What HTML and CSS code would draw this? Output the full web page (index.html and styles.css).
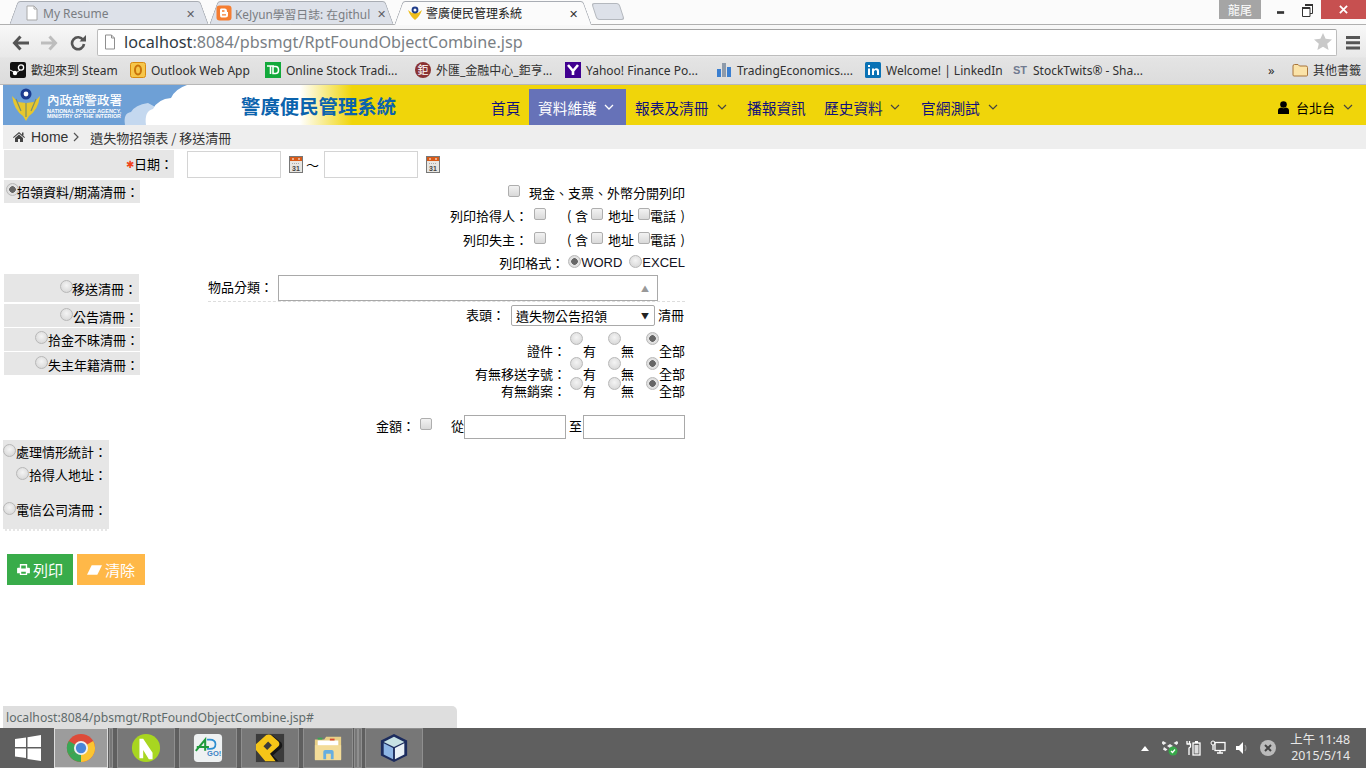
FILE: index.html
```html
<!DOCTYPE html>
<html lang="zh-Hant">
<head>
<meta charset="utf-8">
<title>警廣便民管理系統</title>
<link rel="stylesheet" href="styles.css">
</head>
<body>
<div class="screen">
  <div class="tabstrip">
    <div class="tab t1">
      <svg class="favicon" viewBox="0 0 16 16"><path d="M3 1h7l3 3v11H3z" fill="#fff" stroke="#a8a8a8"/><path d="M10 1v3h3" fill="none" stroke="#a8a8a8"/></svg>
      <span class="tabtext">My Resume</span><span class="tabx">✕</span>
    </div>
    <div class="tab t2">
      <svg class="favicon" viewBox="0 0 16 16"><rect x="0.500" y="0.500" width="15" height="15" rx="3" fill="#f57d31"/><path d="M5 3.500h4q2 0 2 2.500v1h1v3q0 2.500-2.500 2.500h-4Q4 12.500 4 10V5q0-1.500 1-1.500z" fill="#fff"/><path d="M6 6h2.500M6 9.800h4" stroke="#f57d31" stroke-width="1.300"/></svg>
      <span class="tabtext">KeJyun學習日誌: 在githul</span><span class="tabx">✕</span>
    </div>
    <div class="tab t3 active">
      <svg class="favicon" viewBox="0 0 16 16"><path d="M1 5q2 6 7 10q5-4 7-10l-4 3H5z" fill="#eebd1c"/><circle cx="8" cy="5" r="3.400" fill="#1f3d8a"/><circle cx="8" cy="5" r="1.500" fill="#fff"/></svg>
      <span class="tabtext">警廣便民管理系統</span><span class="tabx dark">✕</span>
    </div>
    <div class="newtab"></div>
    <div class="winbtns">
      <span class="ime">龍尾</span>
      <svg class="wmin" viewBox="0 0 9 3"><rect width="8" height="3" fill="#333"/></svg>
      <svg class="wmax" viewBox="0 0 11 13"><path d="M3 .5h7.500v9H8M.5 3.500h7.500v9H.5z" fill="#fff" stroke="#333"/><rect x="3" y="0" width="8" height="2" fill="#333"/><rect x="0" y="3" width="8" height="2" fill="#333"/></svg>
      <span class="wclose"><svg viewBox="0 0 10 10"><path d="M1 1l8 8M9 1l-8 8" stroke="#fff" stroke-width="2"/></svg></span>
    </div>
  </div>

  <div class="chromebars">
    <div class="toolbar">
      <svg class="tool back" viewBox="0 0 18 16"><path d="M8.500 1.500L2.500 8l6 6.500M3 8h14" fill="none" stroke="#555" stroke-width="3"/></svg>
      <svg class="tool fwd" viewBox="0 0 18 16"><path d="M9.500 1.500l6 6.500-6 6.500M15 8H1" fill="none" stroke="#bdbdbd" stroke-width="3"/></svg>
      <svg class="tool reload" viewBox="0 0 16 16"><path d="M13.200 5.200A6 6 0 1 0 14 9" fill="none" stroke="#555" stroke-width="2.600"/><path d="M9.500 6.500H16V0z" fill="#555"/></svg>
      <div class="omnibox">
        <svg class="omnidoc" viewBox="0 0 12 16"><path d="M1.500 1h6l3 3v11h-9z" fill="#fff" stroke="#8f8f8f"/><path d="M7.500 1v3h3" fill="none" stroke="#8f8f8f"/></svg>
        <span class="urlhost">localhost</span><span class="urlrest">:8084/pbsmgt/RptFoundObjectCombine.jsp</span>
        <svg class="star" viewBox="0 0 18 17"><path d="M9 0l2.600 5.800 6.400.7-4.800 4.200 1.400 6.300L9 13.800 3.400 17l1.400-6.300L0 6.500l6.400-.7z" fill="#c9c9c9"/></svg>
      </div>
      <svg class="menu" viewBox="0 0 14 14"><path d="M0 1.500h14M0 6.800h14M0 12h14" stroke="#555" stroke-width="3"/></svg>
    </div>
    <div class="bookmarks">
      <div class="bm"><svg class="bmi" viewBox="0 0 16 16"><rect width="16" height="16" rx="2" fill="#111"/><circle cx="11" cy="5.500" r="2.600" fill="none" stroke="#fff" stroke-width="1.300"/><circle cx="5" cy="11" r="2.200" fill="#fff"/><path d="M0 8l6 3 4-3" stroke="#fff" fill="none"/></svg><span>歡迎來到 Steam</span></div>
      <div class="bm"><svg class="bmi" viewBox="0 0 16 16"><rect x=".5" y=".5" width="15" height="15" rx="2" fill="#f6c64a" stroke="#d88a10"/><ellipse cx="8" cy="8" rx="3" ry="4.500" fill="none" stroke="#c9740c" stroke-width="2"/></svg><span>Outlook Web App</span></div>
      <div class="bm"><svg class="bmi" viewBox="0 0 16 16"><rect width="16" height="16" fill="#12a93b"/><path d="M2 4h7M5.500 4v8M8 4.500h2.500q3 0 3 3.500t-3 3.500H8z" fill="none" stroke="#fff" stroke-width="1.600"/></svg><span>Online Stock Tradi...</span></div>
      <div class="bm"><svg class="bmi" viewBox="0 0 16 16"><circle cx="8" cy="8" r="8" fill="#8a3232"/><text class="jutext" x="8" y="12">鉅</text></svg><span>外匯_金融中心_鉅亨...</span></div>
      <div class="bm"><svg class="bmi" viewBox="0 0 16 16"><rect width="16" height="16" fill="#400090"/><path d="M3 3l5 6 5-6M8 8v5" fill="none" stroke="#fff" stroke-width="2.600"/></svg><span>Yahoo! Finance Po...</span></div>
      <div class="bm"><svg class="bmi" viewBox="0 0 16 16"><rect x="1" y="7" width="4" height="8" fill="#3b7fd0"/><rect x="6" y="1" width="4" height="14" fill="#8d9aaa"/><rect x="11" y="5" width="4" height="10" fill="#3b7fd0"/></svg><span>TradingEconomics....</span></div>
      <div class="bm"><svg class="bmi" viewBox="0 0 16 16"><rect width="16" height="16" rx="1.500" fill="#0a72b5"/><path d="M3 6.500h2V13H3zM3 3h2v2H3zM7 6.500h2v1q1-1.300 2.400-1.300Q14 6.200 14 9v4h-2V9.500q0-1.500-1.300-1.500T9 9.500V13H7z" fill="#fff"/></svg><span>Welcome! | LinkedIn</span></div>
      <div class="bm st"><span class="stlogo">ST</span><span>StockTwits® - Sha...</span></div>
      <div class="bm more">»</div>
      <div class="bm other"><svg class="bmi" viewBox="0 0 16 16"><path d="M1 4q0-1.500 1.500-1.500h3.500l1.500 1.500h6.500q1.500 0 1.500 1.500v7.500q0 1-1 1H2q-1 0-1-1z" fill="#fbe3a8" stroke="#a8743a"/></svg><span>其他書籤</span></div>
    </div>
  </div>

  <header class="sitehead">
    <svg class="logo" viewBox="0 0 200 40">
      <path d="M0 0H187V40H0z" fill="#6ea0d6"/>
      <path d="M122 40Q120 28 128 27Q132 20 145 18L156 24L146 40z" fill="#c4d8ef"/>
      <path d="M143 40Q141 26 150 24Q155 14 168 13Q172 4 184 0H200V40z" fill="#fff"/>
      <path d="M9 11q2 14 11 20l3 5 3-5q9-6 11-20l-6 6-8 1-8-1z" fill="#e7c72e"/>
      <path d="M13 14l5 12M33 14l-5 12M23 18v14" stroke="#7c8f6a" stroke-width="1.200"/>
      <circle cx="23" cy="9" r="5.500" fill="#1d3c8f"/><circle cx="23" cy="9" r="2.400" fill="#fff"/>
      <text class="logocn" x="44" y="20">內政部警政署</text>
      <text class="logoen" x="44" y="28">NATIONAL POLICE AGENCY,</text>
      <text class="logoen" x="44" y="33">MINISTRY OF THE INTERIOR</text>
    </svg>
    <div class="sitetitle">警廣便民管理系統</div>
    <nav class="mainnav">
      <a class="nav n1">首頁</a>
      <a class="nav n2 on">資料維護<svg class="chev" viewBox="0 0 10 6"><path d="M1 1l4 4 4-4" fill="none" stroke="#fff" stroke-width="1.300"/></svg></a>
      <a class="nav n3">報表及清冊<svg class="chev" viewBox="0 0 10 6"><path d="M1 1l4 4 4-4" fill="none" stroke="#444" stroke-width="1.200"/></svg></a>
      <a class="nav n4">播報資訊</a>
      <a class="nav n5">歷史資料<svg class="chev" viewBox="0 0 10 6"><path d="M1 1l4 4 4-4" fill="none" stroke="#444" stroke-width="1.200"/></svg></a>
      <a class="nav n6">官網測試<svg class="chev" viewBox="0 0 10 6"><path d="M1 1l4 4 4-4" fill="none" stroke="#444" stroke-width="1.200"/></svg></a>
    </nav>
    <div class="userbox">
      <svg class="usericon" viewBox="0 0 11 13"><circle cx="5.500" cy="3.500" r="3.300" fill="#000"/><path d="M0 13V9.500Q0 7 3 6.500q2.500 1.500 5 0 3 .5 3 3V13z" fill="#000"/></svg>
      <span>台北台</span>
      <svg class="chev" viewBox="0 0 10 6"><path d="M1 1l4 4 4-4" fill="none" stroke="#444" stroke-width="1.200"/></svg>
    </div>
  </header>

  <div class="crumbs">
    <svg class="homeicon" viewBox="0 0 12 10"><path d="M6 0l6 5.200-.7.800L6 1.500.7 6 0 5.200zM2 6l4-3.400L10 6v4H7V7H5v3H2z" fill="#444"/><rect x="9" y=".5" width="1.500" height="3" fill="#444"/></svg>
    <span class="crumbhome">Home</span>
    <svg class="crumbsep" viewBox="0 0 6 10"><path d="M1 1l4 4-4 4" fill="none" stroke="#555" stroke-width="1.200"/></svg>
    <span class="crumbcur">遺失物招領表 / 移送清冊</span>
  </div>

  <main class="content">
    <div class="daterow">
      <div class="cell datelabel"><span class="req">✱</span>日期：</div>
      <input class="textin dateinput" type="text">
      <svg class="cal" viewBox="0 0 14 17"><rect x=".5" y=".5" width="13" height="16" fill="#e8e6e2" stroke="#777"/><rect x="1" y="1" width="12" height="4" fill="#d85a18"/><path d="M3 3h2M9 3h2" stroke="#fff"/><path d="M3 7.500h8" stroke="#aaa" stroke-dasharray="1 1"/><text class="caltext" x="7" y="15">31</text></svg>
      <span class="tilde">～</span>
      <input class="textin dateinput" type="text">
      <svg class="cal cal2" viewBox="0 0 14 17"><rect x=".5" y=".5" width="13" height="16" fill="#e8e6e2" stroke="#777"/><rect x="1" y="1" width="12" height="4" fill="#d85a18"/><path d="M3 3h2M9 3h2" stroke="#fff"/><path d="M3 7.500h8" stroke="#aaa" stroke-dasharray="1 1"/><text class="caltext" x="7" y="15">31</text></svg>
    </div>

    <div class="formcols">
      <div class="leftcol">
        <div class="cell opt o1"><input type="radio" name="kind" class="rd" checked>招領資料/期滿清冊：</div>
        <div class="cell opt o2"><input type="radio" name="kind" class="rd">移送清冊：</div>
        <div class="cell opt o3"><input type="radio" name="kind" class="rd">公告清冊：</div>
        <div class="cell opt o4"><input type="radio" name="kind" class="rd">拾金不昧清冊：</div>
        <div class="cell opt o4 o5"><input type="radio" name="kind" class="rd">失主年籍清冊：</div>
        <div class="cell stats">
          <div class="statline"><input type="radio" name="kind" class="rd">處理情形統計：</div>
          <div class="statline sub"><input type="radio" name="kind" class="rd">拾得人地址：</div>
          <div class="statline tel"><input type="radio" name="kind" class="rd">電信公司清冊：</div>
        </div>
      </div>

      <div class="rightcol">
        <div class="line l1"><input type="checkbox" class="cb gap9">現金、支票、外幣分開列印</div>
        <div class="line l2">列印拾得人：<input type="checkbox" class="cb c1"><span class="paren">(</span>含<input type="checkbox" class="cb c2">地址<input type="checkbox" class="cb c3">電話<span class="paren2">)</span></div>
        <div class="line l3">列印失主：<input type="checkbox" class="cb c1"><span class="paren">(</span>含<input type="checkbox" class="cb c2">地址<input type="checkbox" class="cb c3">電話<span class="paren2">)</span></div>
        <div class="line l4">列印格式：<input type="radio" name="fmt" class="rd first" checked><span class="latin">WORD</span><input type="radio" name="fmt" class="rd excel"><span class="latin">EXCEL</span></div>
        <div class="line l5"><span class="catlabel">物品分類：</span><div class="combo"><span class="comboarrow">▲</span></div></div>
        <div class="line l6">表頭：<div class="sel"><span>遺失物公告招領</span><span class="selarrow">▼</span></div>清冊</div>
        <div class="line l7 tri">證件：<span class="tcell first"><input type="radio" name="a1" class="rd">有</span><span class="tcell"><input type="radio" name="a1" class="rd">無</span><span class="tcell all"><input type="radio" name="a1" class="rd" checked>全部</span></div>
        <div class="line l8 tri">有無移送字號：<span class="tcell first"><input type="radio" name="a2" class="rd">有</span><span class="tcell"><input type="radio" name="a2" class="rd">無</span><span class="tcell all"><input type="radio" name="a2" class="rd" checked>全部</span></div>
        <div class="line l9 tri">有無銷案：<span class="tcell first"><input type="radio" name="a3" class="rd">有</span><span class="tcell"><input type="radio" name="a3" class="rd">無</span><span class="tcell all"><input type="radio" name="a3" class="rd" checked>全部</span></div>
        <div class="line l10">金額：<input type="checkbox" class="cb money">從<input class="textin amount" type="text"><span class="to">至</span><input class="textin amount" type="text"></div>
      </div>
    </div>

    <div class="actions">
      <button class="btn print"><svg class="btnicon" viewBox="0 0 14 12"><path d="M3 4V0h8v4h2q1 0 1 1v5h-3v2H3v-2H0V5q0-1 1-1zm1.500-2.500V5h5V1.500zm0 7V10.500h5V8.500z" fill="#fff" fill-rule="evenodd"/></svg>列印</button>
      <button class="btn clear"><svg class="btnicon wide" viewBox="0 0 16 10"><path d="M5 0h11L11 10H0z" fill="#fff"/></svg>清除</button>
    </div>
  </main>

  <div class="statusbubble">localhost:8084/pbsmgt/RptFoundObjectCombine.jsp#</div>

  <footer class="taskbar">
    <svg class="winlogo" viewBox="0 0 26 26"><path d="M0 4l11-1.500V12H0zM12.500 2.300L26 0v12H12.500zM0 13.500h11V23L0 21.500zM12.500 13.500H26V26l-13.500-2z" fill="#fff"/></svg>
    <div class="tbtn cr">
      <svg class="appicon" viewBox="0 0 32 32"><circle cx="16" cy="16" r="15" fill="#dd4b39"/><path d="M16 16L3 23.500A15 15 0 0 0 16 31z" fill="#3aa655"/><path d="M16 16L3 23.500A15 15 0 0 1 3 8.500z" fill="#3aa655"/><path d="M16 16v15A15 15 0 0 0 31 16 15 15 0 0 0 29 8.500z" fill="#fbc531"/><circle cx="16" cy="16" r="7.500" fill="#f0f0f0"/><circle cx="16" cy="16" r="5.500" fill="#4a86d8"/></svg>
    </div>
    <div class="tsliver s1"></div>
    <div class="tbtn n">
      <svg class="appicon" viewBox="0 0 32 32"><circle cx="16" cy="16" r="15" fill="#a8d620"/><path d="M9 27V6h4l10 15v7h-4l-6-10v9z" fill="#fff"/></svg>
    </div>
    <div class="tbtn ad">
      <svg class="appicon" viewBox="0 0 32 32"><rect width="30" height="30" x="1" y="1" rx="4" fill="#eef1f2"/><path d="M3 19L13 7v12M4 15h13" fill="none" stroke="#1f9a3b" stroke-width="2.200"/><path d="M15 7h3q6 0 6 5t-6 5h-3" fill="none" stroke="#2d8ed0" stroke-width="1.800"/><text class="gotext" x="15" y="25">GO!</text></svg>
    </div>
    <div class="tbtn pp">
      <svg class="appicon" viewBox="0 0 32 32"><rect x="1" y="1" width="30" height="30" fill="#3b3b3b"/><path d="M1 13L13 3q3-2 6 0l9 7q2 3 0 6L19 24l6 6H12l-3-5z" fill="#161616"/><path d="M1 12L12 2q3-1 5 0l8 7q2 3 0 5l-9 8 6 8H11L1 18z" fill="#f5c518"/><path d="M9 14l5-5 4 4-5 5z" fill="#3b3b3b"/></svg>
    </div>
    <div class="tbtn fo">
      <svg class="appicon" viewBox="0 0 32 32"><path d="M2 7h10l2-3h16v24H2z" fill="#e8cf86"/><path d="M5 8h22v6H5z" fill="#fff"/><path d="M5 5h5v2H5z" fill="#3aa655"/><path d="M18 6h5v2h-5z" fill="#d9482f"/><path d="M2 13h28v16H2z" fill="#f3dc98"/><path d="M11 28v-8q0-2 2-2h7q2 0 2 2v8h-3v-6h-5v6z" fill="#66aee0"/></svg>
    </div>
    <div class="tsliver s2"></div>
    <div class="tsliver s3"></div>
    <div class="tbtn cube">
      <svg class="appicon" viewBox="0 0 32 32"><path d="M16 1l14 7v16l-14 7-14-7V8z" fill="#1c2c5e"/><path d="M16 4l11 5.500L16 15 5 9.500z" fill="#c7e2e4"/><path d="M5 11l10 5v12L5 23z" fill="#8eb6e6"/><path d="M17 16l10-5v12l-10 5z" fill="#e9f1f7"/></svg>
    </div>
    <div class="tray">
      <svg class="trcaret" viewBox="0 0 8 5"><path d="M4 0l4 5H0z" fill="#fff"/></svg>
      <svg class="tri1" viewBox="0 0 16 16"><g fill="#eee"><path d="M1 1l3.500 2-3 2-2-2zM15 1l-3.500 2 3 2 2-2zM8 4l3 2-3 2-3-2z"/><path d="M2 7l3.500 2.500-2 1.500L1 9.500z"/></g><circle cx="11" cy="11" r="4.500" fill="#37a849"/><path d="M9 11l1.500 1.500 2.500-3" stroke="#fff" fill="none" stroke-width="1.300"/></svg>
      <svg class="tri2" viewBox="0 0 15 16"><path d="M1 1v3M3.500 1v3M.5 4h4v3l-1.500 1v7" fill="none" stroke="#fff" stroke-width="1.300"/><rect x="7" y="3" width="7" height="12" fill="none" stroke="#fff" stroke-width="1.300"/><rect x="9" y="1" width="3" height="2" fill="#fff"/><rect x="8.500" y="5" width="4" height="8.500" fill="#ddd"/></svg>
      <svg class="tri3" viewBox="0 0 16 16"><rect x="5" y="2.500" width="10" height="8" fill="none" stroke="#fff" stroke-width="1.300"/><path d="M7 13h6M10 11v2" stroke="#fff" stroke-width="1.300"/><circle cx="3" cy="3" r="2" fill="none" stroke="#fff"/><path d="M3 5v5" stroke="#fff" stroke-width="1.300"/></svg>
      <svg class="tri4" viewBox="0 0 12 14"><path d="M0 5h3l4-4v12L3 9H0z" fill="#fff"/><path d="M9 4q2 3 0 6" fill="none" stroke="#999" stroke-width="1.200"/></svg>
      <svg class="tri5" viewBox="0 0 16 16"><circle cx="8" cy="8" r="8" fill="#bbb"/><path d="M5 5l6 6M11 5l-6 6" stroke="#444" stroke-width="2"/></svg>
      <div class="clock"><span>上午 11:48</span><span>2015/5/14</span></div>
    </div>
  </footer>
</div>
</body>
</html>
```

FILE: styles.css
```css
* { box-sizing: border-box; }
html, body { margin: 0; padding: 0; background: #fff; }
body { font-family: "Noto Sans CJK TC", sans-serif; font-size: 13px; color: #000; overflow: hidden; }
.screen { width: 1366px; height: 768px; display: flex; flex-direction: column; position: relative; overflow: hidden; }

/* tab strip */
.tabstrip { height: 25px; display: flex; align-items: flex-end; background: #fbfbfb; border-bottom: 1px solid #b0b0b0; padding-left: 9px; flex: none; }
.tab { position: relative; height: 24px; display: flex; align-items: center; font: 12px "Noto Sans", "Noto Sans CJK TC", sans-serif; color: #7a7d82; z-index: 1; margin-bottom: -1px; }
.tab::before, .tab::after { content: ""; position: absolute; top: 0; bottom: 0; width: 55%; background: #dde1e9; border-top: 1px solid #a9adb4; z-index: -1; }
.tab::before { left: 0; border-left: 1px solid #a9adb4; transform-origin: bottom left; transform: skewX(-20deg); border-top-left-radius: 3px; border-bottom: 1px solid #b0b0b0; }
.tab::after { right: 0; border-right: 1px solid #a9adb4; transform-origin: bottom right; transform: skewX(20deg); border-top-right-radius: 3px; border-bottom: 1px solid #b0b0b0; }
.tab.active { color: #222; z-index: 2; }
.tab.active::before, .tab.active::after { background: #fbfbfb; border-bottom: 0; }
.t1 { width: 200px; padding: 0 12px 0 15px; }
.t2 { width: 185px; padding: 0 6px 0 7px; }
.t2 .tabtext { font-size: 11.800px; }
.t3 { width: 198px; padding: 0 12px 0 13px; }
.favicon { width: 16px; height: 16px; flex: none; margin-right: 3px; }
.tabtext { flex: 1; white-space: nowrap; overflow: hidden; }
.tabx { flex: none; width: 11px; font-size: 11px; color: #5d6066; margin-left: 7px; line-height: 1; }
.tabx.dark { color: #333; }
.newtab { width: 28px; height: 17px; margin: 0 0 4px 2px; background: #dde1e9; border: 1px solid #b4b8be; border-radius: 3px; transform: skewX(18deg); flex: none; }
.winbtns { margin-left: auto; height: 24px; display: flex; align-items: flex-start; align-self: flex-start; }
.ime { width: 42px; height: 19px; background: #a5a5a5; color: #fff; font-size: 12px; line-height: 19px; text-align: center; }
.wmin { width: 8px; height: 3px; margin: 11px 0 0 16px; }
.wmax { width: 11px; height: 13px; margin: 4px 0 0 17px; }
.wclose { width: 45px; height: 19px; margin-left: 8px; background: #c75050; display: flex; align-items: center; justify-content: center; }
.wclose svg { width: 9px; height: 9px; }

.chromebars { flex: none; height: 60px; background: linear-gradient(#f8f8f8, #e9e9e9 54%, #e4e4e4 56%, #dcdcdc); border-bottom: 1px solid #b8b8b8; }
.toolbar { height: 32px; display: flex; align-items: center; padding-top: 3px; }
.tool { flex: none; }
.back { width: 18px; height: 16px; margin-left: 12px; }
.fwd { width: 18px; height: 16px; margin-left: 10px; }
.reload { width: 16px; height: 16px; margin-left: 12px; }
.omnibox { margin-left: 11px; width: 1240px; height: 27px; background: #fff; border: 1px solid #bdbdbd; border-top-color: #a3a3a3; border-radius: 2px; display: flex; align-items: center; font: 16.200px "Noto Sans", sans-serif; padding: 0 0 2px 6px; }
.omnidoc { width: 12px; height: 16px; margin-right: 8px; flex: none; }
.urlhost { color: #303942; }
.urlrest { color: #7a7f85; }
.star { width: 18px; height: 17px; margin-left: auto; margin-right: 4px; }
.menu { width: 14px; height: 14px; margin-left: 9px; }
.bookmarks { height: 26px; display: grid; grid-template-columns: 120px 135px 150px 150px 151px 149px 148px 255px 24px 80px; padding-left: 10px; align-items: center; font: 12px "Noto Sans", "Noto Sans CJK TC", sans-serif; color: #303030; }
.bm { display: flex; align-items: center; white-space: nowrap; overflow: hidden; }
.bmi { width: 16px; height: 16px; flex: none; margin-right: 5px; }
.stlogo { width: 20px; font: bold 11px "Liberation Sans", sans-serif; color: #707a90; }
.more { font-size: 13px; }
.jutext { font-size: 11px; fill: #fff; text-anchor: middle; }

/* site header */
.sitehead { flex: none; height: 40px; display: flex; align-items: stretch; background: linear-gradient(90deg, #fff 300px, #f0d50a 352px); padding-left: 3px; position: relative; }
.logo { width: 200px; height: 40px; flex: none; }
.logocn { font: 500 12.500px "Noto Sans CJK TC", sans-serif; fill: #fff; }
.logoen { font: bold 5.400px "Liberation Sans", sans-serif; fill: #fff; }
.sitetitle { margin-left: 38px; width: 160px; font-size: 19.400px; font-weight: 700; color: #0b63ad; line-height: 42px; white-space: nowrap; }
.mainnav { display: flex; margin-left: 90px; align-items: stretch; padding-top: 4px; }
.nav { display: flex; align-items: center; font-size: 14.700px; color: #10107e; white-space: nowrap; flex: none; }
.nav.on { background: #6672b8; color: #fff; }
.chev { width: 10px; height: 6px; flex: none; }
.n1 { width: 38px; }
.n2 { width: 97px; padding-left: 9px; }
.n2 .chev { margin-left: 7px; }
.n3 { width: 121px; padding-left: 9px; }
.n3 .chev { margin-left: 9px; }
.n4 { width: 77px; }
.n5 { width: 97px; }
.n5 .chev { margin-left: 7px; }
.n6 { width: 90px; }
.n6 .chev { margin-left: 8px; }
.userbox { margin-left: auto; display: flex; align-items: center; padding-top: 4px; padding-right: 13px; font-size: 13px; color: #000; }
.usericon { width: 11px; height: 13px; margin-right: 7px; }
.userbox .chev { margin-left: 8px; }

.crumbs { flex: none; height: 24px; margin-left: 3px; background: #eee; display: flex; align-items: center; padding-left: 10px; color: #333; }
.homeicon { width: 12px; height: 10px; margin-right: 6px; }
.crumbhome { font: 14px "Liberation Sans", sans-serif; }
.crumbsep { width: 6px; height: 10px; margin: 0 11px 0 5px; }
.crumbcur { font-size: 13px; white-space: nowrap; }

/* form */
.content { flex: 1; padding: 1px 0 0 4px; }
.cell { background: #e6e6e6; }
.daterow { height: 28px; display: flex; align-items: center; }
.datelabel { width: 170px; height: 28px; text-align: right; line-height: 28px; padding-right: 1px; }
.req { color: #f0431b; font-size: 10px; vertical-align: 1px; }
.textin { border: 1px solid #a9a9a9; background: #fff; padding: 0; margin: 0; height: 24px; display: block; border-radius: 0; }
.dateinput { width: 94px; height: 27px; border-color: #d4d4d4; flex: none; }
.daterow .dateinput:first-of-type { margin-left: 13px; }
.cal { width: 14px; height: 17px; margin-left: 8px; flex: none; }
.caltext { font: bold 7px "Liberation Sans", sans-serif; fill: #444; text-anchor: middle; }
.tilde { width: 18px; font-size: 13px; text-align: left; margin-left: 3px; flex: none; }

.formcols { display: flex; margin-top: 2px; }
.leftcol { width: 136px; flex: none; display: flex; flex-direction: column; }
.opt { height: 23px; display: flex; align-items: center; justify-content: flex-end; white-space: nowrap; line-height: 23px; padding-top: 0; }
.rd, .cb { appearance: none; -webkit-appearance: none; margin: 0; flex: none; display: block; }
.rd { width: 13px; height: 13px; border-radius: 50%; border: 1px solid #b8b8b8; background: radial-gradient(circle at 50% 40%, #f4f4f4 0, #dcdcdc 70%, #c8c8c8 100%); }
.rd:checked { background: radial-gradient(circle, #666 0 3px, #e4e4e4 3.600px, #d4d4d4 100%); }
.cb { width: 12px; height: 12px; border-radius: 2px; border: 1px solid #aeaeae; background: linear-gradient(#f2f2f2, #d9d9d9); }
.opt .rd { margin-bottom: 4px; }
.o1 { width: 136px; justify-content: flex-start; padding-left: 2px; }
.o1 .rd { margin-right: -2px; }
.o2 { height: 28px; width: 135px; margin-top: 71px; padding-right: 2px; }
.o2 .rd { margin-right: -1px; }
.o3 { margin-top: 2px; padding-top: 2px; padding-right: 2px; }
.o3 .rd { margin-right: 0; }
.o4 { margin-top: 1px; padding-right: 1px; }
.o5 { padding-top: 2px; }
.stats { margin: 65px 0 0 -1px; width: 106px; height: 91px; position: relative; border-bottom: 2px dotted #fff; }
.statline { display: flex; white-space: nowrap; height: 23px; line-height: 23px; }
.statline .rd { margin-top: 4px; }
.sub { padding-left: 13px; }
.tel { margin-top: 12px; }

.rightcol { width: 545px; flex: none; display: flex; flex-direction: column; }
.line { display: flex; justify-content: flex-end; align-items: center; white-space: nowrap; }
.l1 { height: 23px; padding-top: 1px; }
.l2 { height: 24px; padding-top: 1px; }
.l3 { height: 23px; padding-top: 1px; }
.l4 { height: 24px; padding-top: 1px; }
.gap9 { margin-right: 9px; margin-bottom: 3px; }
.c1 { margin: 0 21px 3px 6px; }
.c2 { margin: 0 5px 3px 3px; }
.c3 { margin: 0 0 3px 4px; }
.paren { width: 8px; }
.paren2 { width: 9px; text-align: right; }
.l4 .rd { margin-bottom: 2px; }
.l4 .first { margin-left: 4px; }
.excel { margin-left: 7px; }
.latin { font: 13px "Liberation Sans", sans-serif; color: #112; }
.l5 { height: 28px; justify-content: flex-start; margin-left: 68px; width: 477px; border-bottom: 1px dashed #ddd; align-items: flex-start; }
.catlabel { width: 70px; line-height: 26px; }
.combo { width: 380px; height: 26px; border: 1px solid #a9a9a9; margin-top: 1px; display: flex; align-items: center; justify-content: flex-end; padding-right: 8px; background: #fff; }
.comboarrow { font-size: 8px; color: #999; }
.l6 { height: 25px; padding-right: 1px; padding-bottom: 1px; }
.sel { width: 144px; height: 21px; border: 1px solid #a9a9a9; border-radius: 2px; margin: 3px 3px 0 6px; display: flex; align-items: center; justify-content: space-between; padding: 0 5px 0 4px; background: #fff; }
.selarrow { font-size: 8px; color: #222; }
.tri { align-items: flex-end; line-height: 18px; }
.l7 { height: 33px; }
.l8 { height: 23px; }
.l9 { height: 17px; }
.tcell { display: flex; align-items: flex-end; height: 18px; line-height: 18px; padding-left: 12px; }
.tcell.first { padding-left: 4px; }
.l7 .rd { margin-bottom: 15px; }
.l8 .rd { margin-bottom: 13px; }
.l9 .rd { margin-bottom: 10px; }
.l10 { height: 24px; margin-top: 15px; align-items: flex-start; line-height: 22px; }
.money { margin: 3px 19px 0 5px; }
.amount { width: 102px; height: 24px; }
.to { margin: 0 1px 0 3px; }

.actions { display: flex; gap: 4px; margin: 23px 0 0 3px; }
.btn { height: 31px; border: 0; margin: 0; padding: 0; color: #fff; font: 15px "Noto Sans CJK TC", sans-serif; display: flex; align-items: center; justify-content: center; border-radius: 0; }
.print { width: 66px; background: #39ac4a; }
.clear { width: 68px; background: #ffb848; }
.btnicon { width: 13px; height: 11px; margin-right: 3px; }
.btnicon.wide { width: 15px; height: 10px; }

.statusbubble { position: absolute; left: 3px; bottom: 40px; width: 454px; height: 22px; background: #dedede; border-top-right-radius: 5px; color: #5f6b6b; font: 12.200px "Noto Sans", sans-serif; line-height: 23px; padding-left: 3px; }

/* taskbar */
.taskbar { flex: none; height: 40px; background: #5f5f5f; display: flex; align-items: stretch; position: relative; }
.winlogo { width: 26px; height: 26px; margin: 7px 13px 0 15px; flex: none; }
.tbtn { width: 58px; margin-right: 4px; background: #777; border: 1px solid #8f8f8f; display: flex; align-items: center; justify-content: center; flex: none; }
.appicon { width: 30px; height: 30px; }
.cr { width: 54px; margin-right: 1px; background: #9c9c9c; border-color: #ddd; }
.fo { width: 50px; margin-right: 1px; }
.tsliver { width: 4px; background: #777; border: 1px solid #8f8f8f; flex: none; }
.s1 { margin-right: 4px; }
.s2 { margin-right: 0; }
.s3 { margin-right: 3px; }
.tray { margin-left: auto; display: flex; align-items: center; color: #e8e8e8; }
.trcaret { width: 8px; height: 5px; margin-right: 13px; }
.tri1 { width: 16px; height: 16px; margin-right: 8px; }
.tri2 { width: 15px; height: 16px; margin-right: 9px; }
.tri3 { width: 16px; height: 16px; margin-right: 10px; }
.tri4 { width: 12px; height: 14px; margin-right: 12px; }
.tri5 { width: 16px; height: 16px; margin-right: 14px; }
.clock { width: 76px; padding-right: 16px; display: flex; flex-direction: column; align-items: flex-end; font: 12.400px "Noto Sans", "Noto Sans CJK TC", sans-serif; line-height: 16px; white-space: nowrap; }
.gotext { font: bold 8px "Liberation Sans", sans-serif; fill: #3a82c4; }
```
